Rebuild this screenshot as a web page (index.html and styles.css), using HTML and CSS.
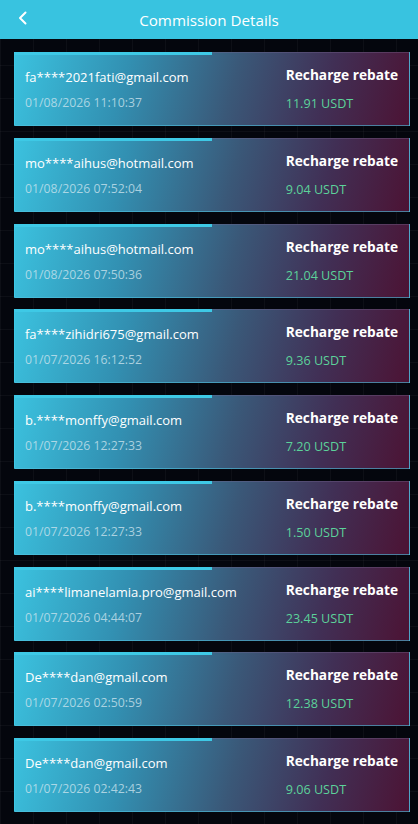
FILE: index.html
```html
<!DOCTYPE html>
<html lang="en">

<head>
    <meta charset="UTF-8">
    <meta name="viewport" content="width=device-width, initial-scale=1.0">
    <title>Commission Details</title>
    <link rel="stylesheet" href="styles.css">
</head>

<body>
    <div class="header">
        <a href="#" class="back">
            <svg width="12" height="14" viewBox="0 0 12 14">
                <path d="M8.5 1.5 L3 7 L8.5 12.5" fill="none" stroke="#fff" stroke-width="2" stroke-linecap="round" stroke-linejoin="round" />
            </svg>
        </a>
        <h1>Commission Details</h1>
    </div>

    <div class="list">
        <div class="card">
            <div class="left">
                <div class="email">fa****2021fati@gmail.com</div>
                <div class="date">01/08/2026 11:10:37</div>
            </div>
            <div class="right">
                <div class="type">Recharge rebate</div>
                <div class="amount">11.91 USDT</div>
            </div>
        </div>
        <div class="card">
            <div class="left">
                <div class="email">mo****aihus@hotmail.com</div>
                <div class="date">01/08/2026 07:52:04</div>
            </div>
            <div class="right">
                <div class="type">Recharge rebate</div>
                <div class="amount">9.04 USDT</div>
            </div>
        </div>
        <div class="card">
            <div class="left">
                <div class="email">mo****aihus@hotmail.com</div>
                <div class="date">01/08/2026 07:50:36</div>
            </div>
            <div class="right">
                <div class="type">Recharge rebate</div>
                <div class="amount">21.04 USDT</div>
            </div>
        </div>
        <div class="card">
            <div class="left">
                <div class="email">fa****zihidri675@gmail.com</div>
                <div class="date">01/07/2026 16:12:52</div>
            </div>
            <div class="right">
                <div class="type">Recharge rebate</div>
                <div class="amount">9.36 USDT</div>
            </div>
        </div>
        <div class="card">
            <div class="left">
                <div class="email">b.****monffy@gmail.com</div>
                <div class="date">01/07/2026 12:27:33</div>
            </div>
            <div class="right">
                <div class="type">Recharge rebate</div>
                <div class="amount">7.20 USDT</div>
            </div>
        </div>
        <div class="card">
            <div class="left">
                <div class="email">b.****monffy@gmail.com</div>
                <div class="date">01/07/2026 12:27:33</div>
            </div>
            <div class="right">
                <div class="type">Recharge rebate</div>
                <div class="amount">1.50 USDT</div>
            </div>
        </div>
        <div class="card">
            <div class="left">
                <div class="email">ai****limanelamia.pro@gmail.com</div>
                <div class="date">01/07/2026 04:44:07</div>
            </div>
            <div class="right">
                <div class="type">Recharge rebate</div>
                <div class="amount">23.45 USDT</div>
            </div>
        </div>
        <div class="card">
            <div class="left">
                <div class="email">De****dan@gmail.com</div>
                <div class="date">01/07/2026 02:50:59</div>
            </div>
            <div class="right">
                <div class="type">Recharge rebate</div>
                <div class="amount">12.38 USDT</div>
            </div>
        </div>
        <div class="card">
            <div class="left">
                <div class="email">De****dan@gmail.com</div>
                <div class="date">01/07/2026 02:42:43</div>
            </div>
            <div class="right">
                <div class="type">Recharge rebate</div>
                <div class="amount">9.06 USDT</div>
            </div>
        </div>
        <!-- next card, only its top edge is on screen -->
        <div class="card"></div>
    </div>
</body>

</html>
```

FILE: styles.css
```css
body {
    margin: 0;
    font-family: "Open Sans", "Noto Sans", sans-serif;
    background-color: #04060d;
    background-image:
        linear-gradient(90deg, rgba(255, 255, 255, 0.035) 1px, transparent 1px),
        linear-gradient(0deg, rgba(255, 255, 255, 0.035) 1px, transparent 1px);
    background-size: 33px 33px;
    height: 824px;
    overflow: hidden;
}

.header {
    height: 39px;
    background-color: #38c3e0;
    display: flex;
    align-items: center;
    justify-content: center;
    position: relative;
}

.header h1 {
    margin: 0;
    color: #fff;
    font-size: 15.2px;
    font-weight: 400;
}

.back {
    position: absolute;
    left: 17px;
    top: 11px;
    display: flex;
}

.list {
    padding: 13px 8px 0 14px;
}

.card {
    position: relative;
    height: 74px;
    margin-bottom: 11.75px;
    box-sizing: border-box;
    padding: 0 11px 0 10px;
    display: flex;
    justify-content: space-between;
    align-items: flex-start;
    border: 1px solid rgba(120, 120, 160, 0.35);
    border-left-color: #3cc8e6;
    border-bottom-color: rgba(80, 190, 220, 0.6);
    background: linear-gradient(105deg, #3bc2df 0%, #3290b2 28%, #3a5878 55%, #412f55 78%, #4c1334 100%);
}

.card::before {
    content: "";
    position: absolute;
    left: -1px;
    top: -1px;
    width: 198px;
    height: 3px;
    background-color: #3ec9e6;
}

.left,
.right {
    display: flex;
    flex-direction: column;
}

.left {
    padding-top: 15px;
    gap: 9px;
}

.right {
    padding-top: 13px;
    gap: 12px;
}

.email {
    color: #fff;
    font-size: 13px;
    line-height: 18px;
}

.date {
    color: rgba(205, 228, 238, 0.78);
    font-size: 12.3px;
    line-height: 16px;
}

.type {
    color: #fff;
    font-size: 13.7px;
    font-weight: 700;
    line-height: 18px;
}

.amount {
    color: #5cd29a;
    font-size: 12.6px;
    line-height: 16px;
}
```
